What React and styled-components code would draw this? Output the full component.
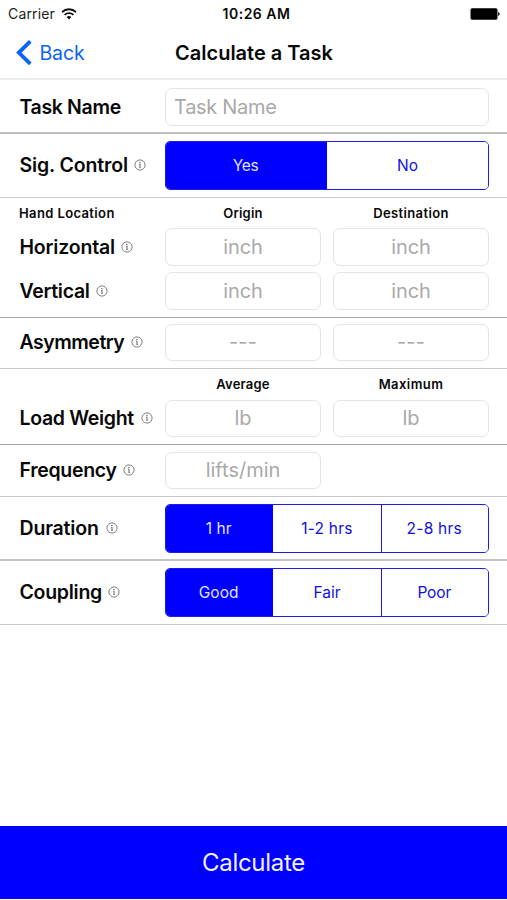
import React, { useState } from 'react';
import styled, { createGlobalStyle } from 'styled-components';

const GlobalStyle = createGlobalStyle`
  *, *::before, *::after { box-sizing: border-box; }
  body { margin: 0; background: #fff; }
  button { font: inherit; }
`;

const Screen = styled.div`
  display: flex;
  flex-direction: column;
  width: 507px;
  height: 900px;
  padding-bottom: 1px;
  overflow: hidden;
  background: #fff;
  color: #080808;
  font-family: Inter, "Liberation Sans", sans-serif;
  white-space: nowrap;
`;

const StatusBar = styled.header`
  display: grid;
  grid-template-columns: 1fr auto 1fr;
  align-items: center;
  height: 28px;
  padding: 0 7px 0 8px;
  font-size: 14px;
  line-height: 20px;
`;

const Carrier = styled.div`
  display: flex;
  align-items: center;
  gap: 6px;
  color: #222;
  letter-spacing: 0.15px;
`;

const Clock = styled.time`
  font-weight: 600;
  letter-spacing: 0.5px;
  margin-left: 5px;
`;

const BatterySlot = styled.div`
  display: flex;
  justify-content: flex-end;
`;

const NavBar = styled.nav`
  display: grid;
  grid-template-columns: 1fr auto 1fr;
  align-items: center;
  height: 52px;
  padding: 0 15px 0 16px;
  border-bottom: 2px solid #ebebeb;
`;

const BackButton = styled.button`
  display: flex;
  align-items: center;
  gap: 6.5px;
  padding: 0;
  border: 0;
  background: none;
  color: #0a63f8;
  font-size: 19.5px;
  line-height: 24px;
  letter-spacing: -0.15px;
`;

const Title = styled.h1`
  margin: 0;
  font-size: 20px;
  font-weight: 600;
  line-height: 24px;
`;

const Section = styled.section`
  display: flex;
  flex-direction: column;
  height: ${(p) => p.$height}px;
  padding-top: ${(p) => p.$top}px;
  border-bottom: ${(p) => p.$rule || '1px solid #c9c9c9'};
`;

const Row = styled.div`
  display: grid;
  grid-template-columns: 146px 156px 156px;
  align-items: center;
  height: ${(p) => p.$height}px;
  margin-bottom: ${(p) => p.$after || 0}px;
  padding-left: 19px;

  & > :nth-child(3) {
    margin-left: 12px;
    margin-right: -12px;
  }
`;

const LabelCell = styled.div`
  display: flex;
  align-items: center;
  gap: ${(p) => p.$gap || 6.5}px;
  padding: 0 0 1px 0.5px;
`;

const Label = styled.span`
  font-size: 19.5px;
  font-weight: 600;
  line-height: 24px;
  letter-spacing: ${(p) => p.$track}px;
`;

const Caption = styled.span`
  font-size: 13px;
  font-weight: 600;
  line-height: 16px;
  letter-spacing: ${(p) => p.$track}px;
  text-align: ${(p) => p.$align || 'center'};
`;

const Field = styled.div`
  display: flex;
  align-items: center;
  justify-content: ${(p) => (p.$wide ? 'flex-start' : 'center')};
  height: 100%;
  grid-column: ${(p) => (p.$wide ? '2 / 4' : 'auto')};
  width: ${(p) => (p.$wide ? '324px' : 'auto')};
  padding: 0 8px 1px;
  border: 1px solid #e4e4e4;
  border-radius: 7px;
  color: #a9a9a9;
  font-size: 20px;
  line-height: 24px;
  letter-spacing: ${(p) => p.$track || 0}px;
`;

const Segments = styled.div`
  display: flex;
  grid-column: 2 / 4;
  width: 324px;
  height: 100%;
  border: 1px solid #1c1cec;
  border-radius: 5px;
  overflow: hidden;
`;

const Segment = styled.button`
  flex: 1 1 0;
  padding: 0;
  border: 0;
  background: ${(p) => (p.$active ? '#0000ff' : '#fff')};
  box-shadow: ${(p) => (p.$divided ? 'inset 1px 0 #1c1cec' : 'none')};
  color: ${(p) => (p.$active ? '#e2e2ff' : '#1010e0')};
  font-size: 15.5px;
  letter-spacing: ${(p) => p.$track || 0}px;
  text-indent: ${(p) => (p.$active ? -2 : 0)}px;
`;

const CalculateButton = styled.button`
  height: 73px;
  margin-top: auto;
  padding: 0;
  border: 0;
  background: #0000ff;
  color: #f0f0ff;
  font-size: 24px;
  letter-spacing: -0.3px;
`;

const WifiIcon = () => (
  <svg width="16" height="12" viewBox="0 0 16 12" fill="none" stroke="#111" strokeWidth="1.9">
    <path d="M1 4.1a10.2 10.2 0 0 1 14 0" />
    <path d="M3.6 6.9a6.4 6.4 0 0 1 8.8 0" />
    <path d="M8 11.6 5.6 9.1a3.5 3.5 0 0 1 4.8 0Z" fill="#111" stroke="none" />
  </svg>
);

const BatteryIcon = () => (
  <svg width="30" height="12" viewBox="0 0 30 12">
    <rect x="0.5" y="0.3" width="27" height="11.4" rx="1.6" />
    <path d="M28.2 4.1c1.9.5 1.9 3.3 0 3.8Z" />
  </svg>
);

const ChevronIcon = () => (
  <svg width="17" height="26" viewBox="0 0 17 26" fill="none" stroke="currentColor" strokeWidth="3.8">
    <path d="M14.3 1.3 2.8 12.6l11.5 11.3" />
  </svg>
);

const InfoIcon = () => (
  <svg width="12" height="12" viewBox="0 0 12 12" fill="none" stroke="#707070">
    <circle cx="6" cy="6" r="5.1" strokeWidth="0.9" />
    <path d="M5.1 5.2H6v3.2" strokeWidth="1.1" />
    <path d="M5 8.5h2.1" strokeWidth="0.6" />
    <circle cx="5.9" cy="3.5" r="0.75" fill="#707070" stroke="none" />
  </svg>
);

const InfoLabel = ({ text, track, gap }) => (
  <LabelCell $gap={gap}>
    <Label $track={track}>{text}</Label>
    <InfoIcon />
  </LabelCell>
);

const SegmentedControl = ({ options, tracks = [] }) => {
  const [active, setActive] = useState(0);
  return (
    <Segments>
      {options.map((option, i) => (
        <Segment
          key={option}
          $active={i === active}
          $divided={i > 0 && i !== active && i - 1 !== active}
          $track={tracks[i]}
          onClick={() => setActive(i)}
        >
          {option}
        </Segment>
      ))}
    </Segments>
  );
};

export default function App() {
  return (
    <Screen>
      <GlobalStyle />
      <StatusBar>
        <Carrier>
          Carrier
          <WifiIcon />
        </Carrier>
        <Clock>10:26 AM</Clock>
        <BatterySlot>
          <BatteryIcon />
        </BatterySlot>
      </StatusBar>
      <NavBar>
        <BackButton>
          <ChevronIcon />
          Back
        </BackButton>
        <Title>Calculate a Task</Title>
      </NavBar>

      <Section $height={54} $top={8} $rule="2px solid #bebebe">
        <Row $height={38}>
          <LabelCell>
            <Label $track={-0.35}>Task Name</Label>
          </LabelCell>
          <Field $wide $track={-0.3}>Task Name</Field>
        </Row>
      </Section>

      <Section $height={64} $top={7}>
        <Row $height={49}>
          <InfoLabel text="Sig. Control" track={-0.14} />
          <SegmentedControl options={['Yes', 'No']} tracks={[-0.3, 0]} />
        </Row>
      </Section>

      <Section $height={120} $top={7} $rule="1px solid #a4a4a4">
        <Row $height={16} $after={7}>
          <Caption $align="left" $track={0.38}>Hand Location</Caption>
          <Caption $track={0.25}>Origin</Caption>
          <Caption $track={0.38}>Destination</Caption>
        </Row>
        <Row $height={38} $after={6}>
          <InfoLabel text="Horizontal" track={-0.17} gap={6.2} />
          <Field $track={-0.1}>inch</Field>
          <Field $track={-0.1}>inch</Field>
        </Row>
        <Row $height={38}>
          <InfoLabel text="Vertical" track={-0.3} />
          <Field $track={-0.1}>inch</Field>
          <Field $track={-0.1}>inch</Field>
        </Row>
      </Section>

      <Section $height={51} $top={6}>
        <Row $height={37}>
          <InfoLabel text="Asymmetry" track={-0.5} gap={7} />
          <Field $track={0.2}>---</Field>
          <Field $track={0.2}>---</Field>
        </Row>
      </Section>

      <Section $height={76} $top={7} $rule="1px solid #a4a4a4">
        <Row $height={16} $after={8}>
          <span />
          <Caption $track={0.2}>Average</Caption>
          <Caption $track={0.43}>Maximum</Caption>
        </Row>
        <Row $height={37}>
          <InfoLabel text="Load Weight" track={-0.33} gap={7} />
          <Field>lb</Field>
          <Field>lb</Field>
        </Row>
      </Section>

      <Section $height={52} $top={7}>
        <Row $height={37}>
          <InfoLabel text="Frequency" track={-0.31} />
          <Field $track={0}>lifts/min</Field>
        </Row>
      </Section>

      <Section $height={64} $top={7} $rule="2px solid #c4c4c4">
        <Row $height={49}>
          <InfoLabel text="Duration" track={-0.18} gap={7.2} />
          <SegmentedControl options={['1 hr', '1-2 hrs', '2-8 hrs']} tracks={[0.1, 0.22, 0.25]} />
        </Row>
      </Section>

      <Section $height={64} $top={7}>
        <Row $height={49}>
          <InfoLabel text="Coupling" track={-0.28} />
          <SegmentedControl options={['Good', 'Fair', 'Poor']} tracks={[0.1, 0, -0.1]} />
        </Row>
      </Section>

      <CalculateButton>Calculate</CalculateButton>
    </Screen>
  );
}
